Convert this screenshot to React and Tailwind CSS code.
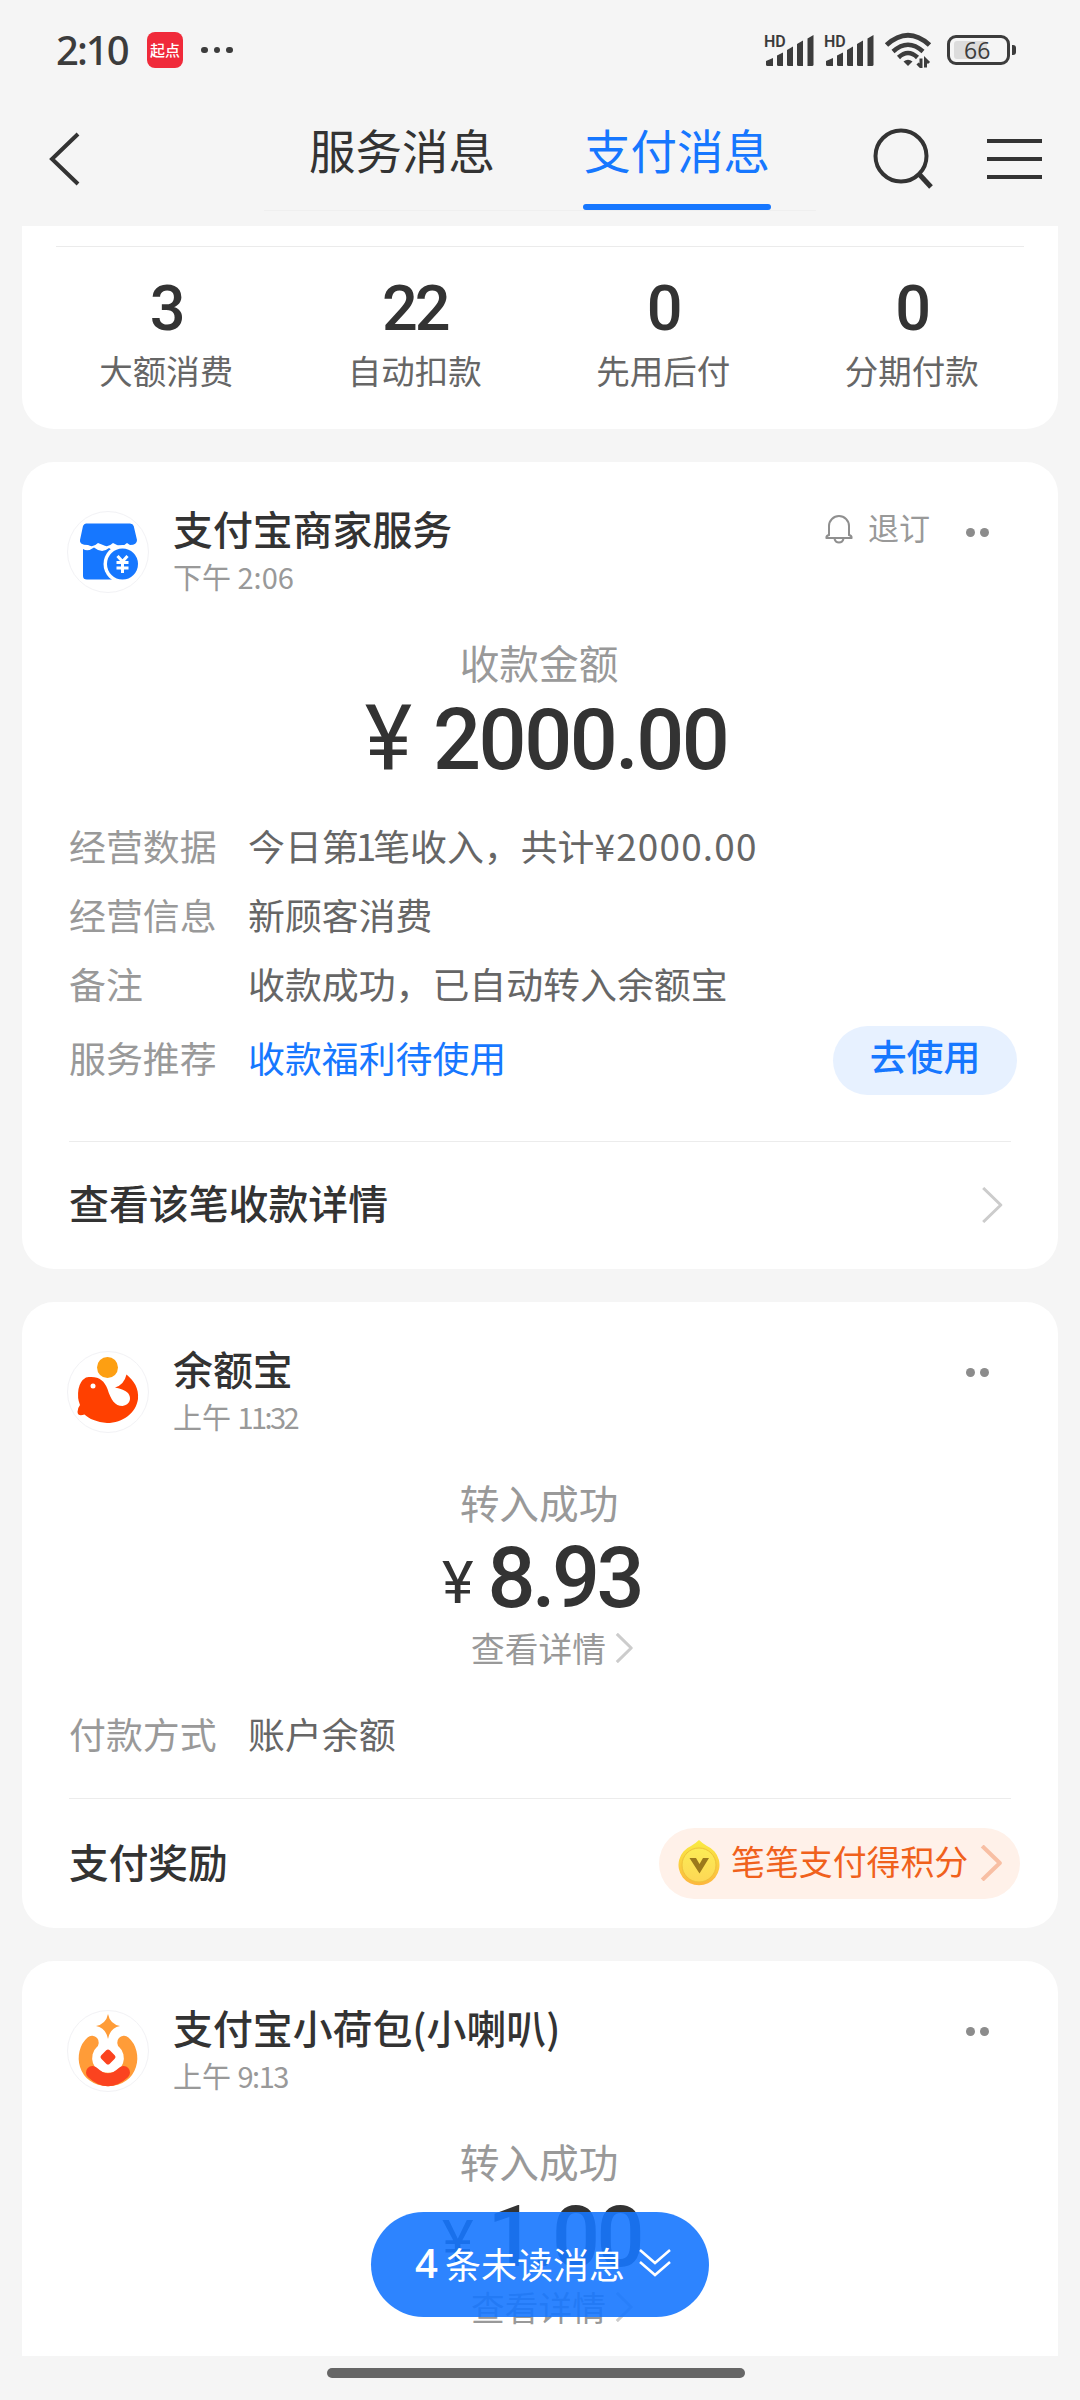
import React from 'react';

const stats = [
  { value: '3', label: '大额消费' },
  { value: '22', label: '自动扣款' },
  { value: '0', label: '先用后付' },
  { value: '0', label: '分期付款' },
];

const Signal = () => (
  <svg className="overflow-visible" width="50" height="36" viewBox="0 0 50 36" fill="#3c3c3c">
    <text x="0" y="14.500" fontSize="16" fontWeight="600" fontFamily="Roboto, sans-serif">HD</text>
    <path d="M2 29 9 26V34H3.500Q2 34 2 32.500Z" />
    <path d="M13 23.500 19 20.500V34H14.500Q13 34 13 32.500Z" />
    <path d="M23 18 29 14.500V34H24.500Q23 34 23 32.500Z" />
    <path d="M33 12 39 8.500V34H34.500Q33 34 33 32.500Z" />
    <path d="M43.500 6.500 49.500 3V32.500Q49.500 34 48 34H43.500Z" />
  </svg>
);

const Wifi = () => (
  <svg width="48" height="36" viewBox="0 0 48 36" fill="none" stroke="#3c3c3c">
    <path d="M2.500 13Q24-6.500 45.500 13" strokeWidth="5" />
    <path d="M9 19.500Q24 6 39 19.500" strokeWidth="4.500" />
    <path d="M14.500 25.500Q24 16.500 33.500 25.500" strokeWidth="4.500" />
    <path d="M24 34 19.500 29.500Q24 26 28.500 29.500Z" fill="#3c3c3c" stroke="none" />
    <path d="M37 26.500V35L33.500 31.500M41.500 35.500V27.500L45 31" strokeWidth="3" />
  </svg>
);

const Battery = () => (
  <div className="flex items-center gap-[2px]">
    <div className="flex h-[30px] w-[63px] items-center rounded-[9px] border-[3px] border-[#3c3c3c] p-[4px]">
      <div className="flex h-[18px] w-[33px] items-center rounded-[3px] bg-[#dcdcdc] pl-[10px] font-['Open_Sans'] text-[23px] font-medium text-[#3c3c3c]">66</div>
    </div>
    <div className="h-[10px] w-[4px] rounded-r-[3px] bg-[#3c3c3c]" />
  </div>
);

const Chevron = ({ width, height, stroke, strokeWidth = 3 }) => (
  <svg width={width} height={height} viewBox="0 0 20 36" preserveAspectRatio="none" fill="none" className="shrink-0">
    <path d="M2 1 18 18 2 35" stroke={stroke} strokeWidth={strokeWidth} strokeLinejoin="round" vectorEffect="non-scaling-stroke" />
  </svg>
);

const ShopLogo = () => (
  <svg width="80" height="80" viewBox="0 0 80 80">
    <path d="M18 11.500H62Q65 11.500 65.700 14L69 28Q69 33 62 33L59 31Q54 36 49 33L45 31Q40 36 35 33L30 31Q25 36 20 33Q11 33 12 28L15 14Q16 11.500 18 11.500Z" fill="#1677ff" />
    <path d="M15 37Q20 40 26 35.500Q34 42 41 36Q46 40 49 37L55 45 45 67.500H19Q15 67.500 15 64Z" fill="#1677ff" />
    <circle cx="54.500" cy="52" r="19" fill="#fff" />
    <circle cx="54.500" cy="52" r="15.500" fill="#1677ff" />
    <path d="M49.500 44 54.500 49.500 59.500 44M48.500 50.500H60.500M48.500 56H60.500M54.500 49.500V61" fill="none" stroke="#fff" strokeWidth="3" />
  </svg>
);

const FishLogo = () => (
  <svg width="80" height="80" viewBox="0 0 80 80">
    <circle cx="39.500" cy="15.500" r="10.500" fill="#fd9f12" />
    <path d="M18 25.500C30 23.500 36 28 39.500 37C43 48 47 54 54.500 54C62 53 64 46 60 41Q56 37 47 35.500Q56 33 58.500 22.500C66 29 71 36 70 47C68 61 55 71 39 71C29 70 21 67 16.500 62.500Q10 65 9.500 60Q9.500 56 12 53Q9 46 10.500 37Q12 29 18 25.500Z" fill="#ff4000" />
    <circle cx="25" cy="34" r="2.500" fill="#fff" />
  </svg>
);

const PouchLogo = () => (
  <svg width="80" height="80" viewBox="0 0 80 80" fill="none">
    <path d="M24 31.500C12 42 16 68.500 40 68.500S68 42 56 31.500" stroke="#ff9c38" strokeWidth="13.500" strokeLinecap="round" />
    <path d="M24.500 61.500Q40 76 55.500 61.500" stroke="#fb431f" strokeWidth="13" strokeLinecap="round" />
    <path d="M40 3Q42 13 52 15Q42 17 40 28Q38 17 28 15Q38 13 40 3Z" fill="#ff9c38" />
    <rect x="34" y="40" width="12" height="12" rx="2.500" transform="rotate(45 40 46)" fill="#fb431f" />
  </svg>
);

const Coin = () => (
  <svg width="42" height="48" viewBox="0 0 42 48">
    <defs>
      <linearGradient id="coin" x1="0" y1="0" x2="0" y2="1">
        <stop offset="0" stopColor="#f9ec43" />
        <stop offset="1" stopColor="#fdb63e" />
      </linearGradient>
      <linearGradient id="coinFace" x1="0" y1="0" x2="0" y2="1">
        <stop offset="0" stopColor="#fcec55" />
        <stop offset="1" stopColor="#fdd755" />
      </linearGradient>
    </defs>
    <path d="M21 1Q24 4 29 7A20.500 20.500 0 1 1 13 7Q18 4 21 1Z" fill="url(#coin)" />
    <circle cx="21" cy="26" r="17" fill="url(#coinFace)" stroke="#eec23a" />
    <path d="M11.500 19H18L21.500 25 25 19H31L21.500 34.500Z" fill="#9c791b" />
  </svg>
);

const CardHeader = ({ logo, title, time, timeClass = '', unsubscribe }) => (
  <div className="flex h-[144px] pl-[45px] pr-[69px]">
    <div className="mt-[49px] h-[82px] w-[82px] shrink-0 rounded-full border border-[#f2f2f5]">{logo}</div>
    <div className="ml-[24px] flex-1 pt-[39px]">
      <div className="h-[55px] text-[39.900px] font-medium leading-[54px] text-[#333]">{title}</div>
      <div className="h-[40px] text-[29px] leading-[40px] text-[#999]">
        {time[0]} <span className={timeClass}>{time[1]}</span>
      </div>
    </div>
    <div className="mt-[35px] flex h-[60px] items-center pt-[10px] text-[#999]">
      {unsubscribe && (
        <div className="mb-[7px] mr-[36px] flex items-center">
          <svg width="28" height="30" viewBox="0 0 28 30" fill="none" stroke="#8f8f8f" strokeWidth="2">
            <path d="M4 21V12a10 10 0 0 1 20 0v9q3 1 2.500 3H1.500Q1 22 4 21ZM9.500 25q1 3.500 4.500 3.500T18.500 25" />
          </svg>
          <span className="-mt-[4px] ml-[15px] text-[31px] leading-[40px]">退订</span>
        </div>
      )}
      <div className="flex gap-[5px]">
        <div className="h-[9px] w-[9px] rounded-full bg-[#8c8c8c]" />
        <div className="h-[9px] w-[9px] rounded-full bg-[#8c8c8c]" />
      </div>
    </div>
  </div>
);

const SmallAmount = ({ value }) => (
  <>
    <div className="h-[61px] pr-[2px] text-center text-[39.700px] leading-[58px] text-[#999]">转入成功</div>
    <div className="flex h-[89px] items-baseline justify-center pl-[3px] font-['Roboto'] leading-[90px] text-[#333]">
      <span className="relative -top-[4px] mr-[14px] text-[60px]">¥</span>
      <span className="text-[84.500px] font-medium tracking-[-3.500px]">{value}</span>
    </div>
    <div className="flex h-[50px] items-center justify-center gap-[9px] pl-[24px] text-[33.700px] leading-[50px] text-[#999]">
      查看详情
      <Chevron width={18} height={30} stroke="#ccc" />
    </div>
  </>
);

const Row = ({ label, children }) => (
  <div className="flex h-[69px] items-center text-[36.900px]">
    <span className="w-[179px] text-[#999]">{label}</span>
    <span className="flex-1 text-[#666]">{children}</span>
  </div>
);

const App = () => {
  return (
    <div className="relative flex h-[2400px] w-[1080px] flex-col overflow-hidden bg-[#f5f5f5] font-['Noto_Sans_CJK_SC',sans-serif]">
      <div className="flex h-[100px] shrink-0 items-center pl-[56px] pr-[64px] text-[#3c3c3c]">
        <span className="w-[91px] font-['Noto_Sans'] text-[40px] font-medium tracking-[-2px]">2:10</span>
        <div className="flex h-[36px] w-[36px] items-center justify-center rounded-[8px] bg-[#f02a3a] text-[15px] font-medium text-white">起点</div>
        <div className="ml-[18px] flex gap-[6px]">
          <div className="h-[6.500px] w-[6.500px] rounded-full bg-[#3c3c3c]" />
          <div className="h-[6.500px] w-[6.500px] rounded-full bg-[#3c3c3c]" />
          <div className="h-[6.500px] w-[6.500px] rounded-full bg-[#3c3c3c]" />
        </div>
        <div className="ml-auto flex items-center gap-[10px]">
          <Signal />
          <Signal />
          <Wifi />
          <div className="ml-[5px]"><Battery /></div>
        </div>
      </div>

      <div className="flex h-[126px] shrink-0 pl-[48px]">
        <svg className="mt-[32px]" width="32" height="54" viewBox="0 0 32 54" fill="none" stroke="#333" strokeWidth="4">
          <path d="M30 2 4 27 30 52" />
        </svg>
        <div className="ml-[184px] grid h-[111px] w-[552px] grid-cols-2 border-b border-[#efefef] text-[46.500px] leading-[68px]">
          <div className="pt-[15px] text-center text-[#333]">服务消息</div>
          <div className="flex flex-col items-center pr-[2px] pt-[15px] text-[#1677ff]">
            支付消息
            <div className="mt-[21px] h-[6px] w-[188px] shrink-0 rounded-full bg-[#1677ff]" />
          </div>
        </div>
        <svg className="ml-[57px] mt-[28px]" width="62" height="64" viewBox="0 0 62 64" fill="none" stroke="#333" strokeWidth="4">
          <circle cx="28" cy="28" r="25.500" />
          <path d="M46 46 58 59" strokeWidth="5" />
        </svg>
        <div className="ml-[52px] mt-[39px] flex w-[55px] flex-col gap-[14px]">
          <div className="h-[4px] bg-[#333]" />
          <div className="h-[4px] bg-[#333]" />
          <div className="h-[4px] bg-[#333]" />
        </div>
      </div>

      <div className="h-[2130px] shrink-0 overflow-hidden px-[22px]">
        <div className="h-[203px] rounded-b-[32px] bg-white px-[20px] pt-[20px]">
          <div className="mx-[14px] h-px bg-[#ebebeb]" />
          <div className="grid grid-cols-4 pr-[2px] text-center">
            {stats.map((item) => (
              <div key={item.label}>
                <div className="mt-[22px] h-[79px] font-['Roboto'] text-[63px] font-medium leading-[80px] tracking-[-3px] text-[#333]">{item.value}</div>
                <div className="h-[44px] text-[33.500px] leading-[43px] text-[#666]">{item.label}</div>
              </div>
            ))}
          </div>
        </div>

        <div className="mt-[33px] h-[807px] rounded-[32px] bg-white">
          <CardHeader logo={<ShopLogo />} title="支付宝商家服务" time={['下午', '2:06']} unsubscribe />
          <div className="mt-[27px] h-[61px] pr-[2px] text-center text-[39.700px] leading-[58px] text-[#999]">收款金额</div>
          <div className="flex h-[89px] items-baseline justify-center pl-[12px] font-['Roboto'] leading-[90px] text-[#333]">
            <span className="mr-[21px] text-[90px]">¥</span>
            <span className="text-[84.500px] font-medium tracking-[-2.500px]">2000.00</span>
          </div>
          <div className="mt-[28px] pl-[47px] pr-[41px]">
            <Row label="经营数据">
              今日第<span className="-mx-[3px]">1</span>笔收入，共计<span className="tracking-[1.200px]">¥2000.00</span>
            </Row>
            <Row label="经营信息">新顾客消费</Row>
            <Row label="备注">收款成功，已自动转入余额宝</Row>
            <div className="flex h-[79px] items-center text-[36.900px]">
              <span className="w-[179px] text-[#999]">服务推荐</span>
              <span className="flex-1 text-[#1677ff]">收款福利待使用</span>
              <div className="mt-[5px] flex h-[69px] w-[184px] items-center justify-center rounded-full bg-[#e7f1ff] pb-[8px] font-medium text-[#1677ff]">去使用</div>
            </div>
          </div>
          <div className="ml-[47px] mr-[47px] mt-[44px] h-px bg-[#ececec]" />
          <div className="flex h-[119px] items-center justify-between pl-[47px] pr-[55px] text-[39.900px] font-medium text-[#333]">
            查看该笔收款详情
            <div className="mt-[6px]">
              <Chevron width={22} height={36} stroke="#ccc" />
            </div>
          </div>
        </div>

        <div className="mt-[33px] h-[626px] rounded-[32px] bg-white">
          <CardHeader logo={<FishLogo />} title="余额宝" time={['上午', '11:32']} timeClass="tracking-[-2.600px]" />
          <div className="mt-[27px]">
            <SmallAmount value="8.93" />
          </div>
          <div className="mt-[26px] pl-[47px]">
            <Row label="付款方式">账户余额</Row>
          </div>
          <div className="ml-[47px] mr-[47px] mt-[30px] h-px bg-[#ececec]" />
          <div className="flex h-[128px] items-center justify-between pl-[47px] pr-[38px]">
            <span className="mb-[5px] text-[39.700px] font-medium text-[#333]">支付奖励</span>
            <div className="flex h-[71px] w-[361px] items-center rounded-full bg-[#fff1e9] pl-[19px] text-[33.900px] text-[#f0611c]">
              <Coin />
              <span className="mb-[3px] ml-[11px] mr-[12px]">笔笔支付得积分</span>
              <Chevron width={22} height={36} stroke="#f8bfa4" strokeWidth={4} />
            </div>
          </div>
        </div>

        <div className="mt-[33px] h-[626px] rounded-[32px] bg-white">
          <CardHeader logo={<PouchLogo />} title="支付宝小荷包(小喇叭)" time={['上午', '9:13']} timeClass="tracking-[-1.500px]" />
          <div className="mt-[27px]">
            <SmallAmount value="1.00" />
          </div>
        </div>
      </div>

      <div className="ml-[327px] mt-[12px] h-[10px] w-[418px] shrink-0 rounded-full bg-[#666]" />

      <div className="absolute left-[371px] top-[2212px] flex h-[105px] w-[338px] items-center rounded-full bg-[#1677ff]/90 pb-[3px] pl-[44px] text-[36px] text-white">
        <span className="font-['Open_Sans'] text-[40px] font-semibold">4</span>
        <span className="ml-[7px]">条未读消息</span>
        <svg className="ml-[14px]" width="32" height="30" viewBox="0 0 32 30" fill="none" stroke="#fff" strokeWidth="2.500">
          <path d="M1 2 16 15 31 2M1 14 16 27 31 14" />
        </svg>
      </div>
    </div>
  );
};

export default App;
